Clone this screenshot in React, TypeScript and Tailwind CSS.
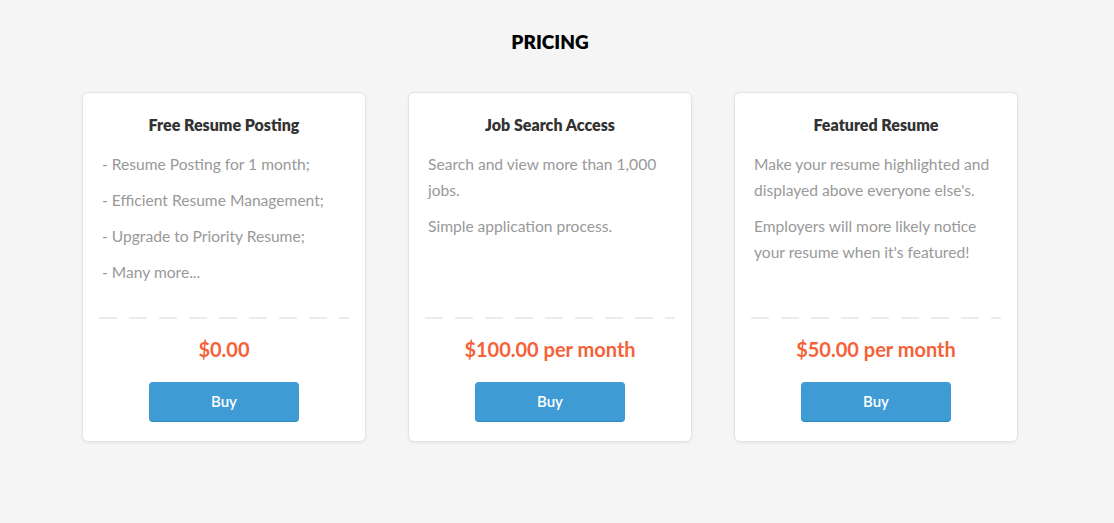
const plans = [
  {
    title: "Free Resume Posting",
    lines: [
      "- Resume Posting for 1 month;",
      "- Efficient Resume Management;",
      "- Upgrade to Priority Resume;",
      "- Many more...",
    ],
    price: "$0.00",
  },
  {
    title: "Job Search Access",
    lines: ["Search and view more than 1,000 jobs.", "Simple application process."],
    price: "$100.00 per month",
  },
  {
    title: "Featured Resume",
    lines: [
      "Make your resume highlighted and displayed above everyone else's.",
      "Employers will more likely notice your resume when it's featured!",
    ],
    price: "$50.00 per month",
  },
];

export default function App() {
  return (
    <div className="min-h-screen bg-[#f5f5f5] font-['Lato','Open_Sans',sans-serif]">
      <div className="w-[1100px] pt-7">
        <h1 className="text-center text-[19px] leading-[28px] font-extrabold text-black mb-9">PRICING</h1>

        <div className="mx-auto w-[936px] grid grid-cols-3 gap-[42px]">
          {plans.map((p) => (
            <div
              key={p.title}
              className="h-[350px] flex flex-col bg-white border border-[#e3e3e3] rounded-md shadow-[0_1px_3px_rgba(0,0,0,0.06)]"
            >
              <h2 className="pt-5 text-center text-[16px] leading-6 font-extrabold text-[#333]">{p.title}</h2>

              <div className="flex-1 pl-[19px] pr-5 pt-[14px]">
                {p.lines.map((l) => (
                  <p key={l} className="text-[15.6px] leading-[26px] text-[#999] mb-[10px]">
                    {l}
                  </p>
                ))}
              </div>

              <div className="mx-4 mt-1 h-[2px] bg-[linear-gradient(to_right,#ececec_60%,transparent_0)] bg-[length:30px_2px] bg-repeat-x" />

              <div className="pt-4 pb-[19px] flex flex-col items-center">
                <div className="text-[20px] leading-7 font-bold text-[#f4623a]">{p.price}</div>
                <button className="mt-[19px] w-[150px] h-[40px] rounded bg-[#3e9bd4] border-b border-[#2f86bd] text-white text-[15px] font-semibold">
                  Buy
                </button>
              </div>
            </div>
          ))}
        </div>
      </div>
    </div>
  );
}
